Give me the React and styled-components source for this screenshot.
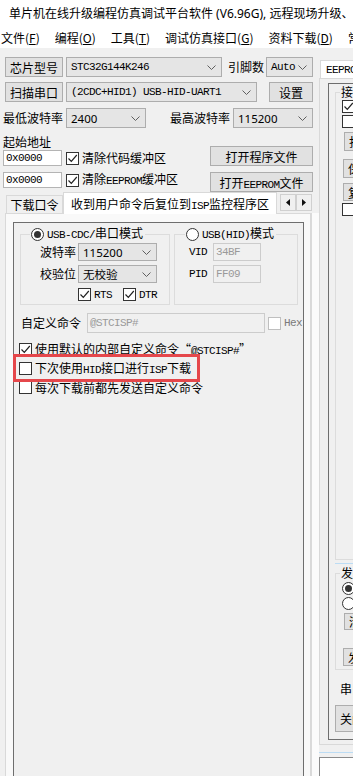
import React from "react";
import styled, { createGlobalStyle } from "styled-components";

const GlobalStyle = createGlobalStyle`
    html, body {
        margin: 0;
        padding: 0;
        background: #f0f0f0;
    }
    body {
        font-family: "Noto Sans CJK SC", "Noto Sans", sans-serif;
        font-size: 12px;
        color: #000;
    }
`;

const MONO = `"Liberation Mono", "Noto Sans CJK SC", monospace`;

const Window = styled.div`
    width: 353px;
    height: 776px;
    overflow: hidden;
    display: flex;
    flex-direction: column;
    background: #f0f0f0;
`;

const TitleBar = styled.div`
    height: 26px;
    flex-shrink: 0;
    background: #fff;
    display: flex;
    align-items: center;
    gap: 5px;
    padding-left: 4px;
    white-space: nowrap;
    font-family: "Noto Sans", "Noto Sans CJK SC", sans-serif;
    font-size: 12px;
`;

const MenuBar = styled.div`
    height: 22px;
    flex-shrink: 0;
    background: #fff;
    display: flex;
    align-items: center;
    gap: 15px;
    padding-left: 1px;
    white-space: nowrap;
    font-size: 12px;
`;

const MenuItem = styled.span`
    flex-shrink: 0;
    u {
        text-decoration: underline;
    }
`;

const Body = styled.div`
    flex: 1;
    min-height: 0;
    display: flex;
    overflow: hidden;
`;

const LeftCol = styled.div`
    width: 311px;
    flex-shrink: 0;
    padding-top: 9px;
    display: flex;
    flex-direction: column;
`;

const Splitter = styled.div`
    width: 7px;
    flex-shrink: 0;
    margin-top: 165px;
    background: #fbfbfb;
    border-left: 1px solid #dadada;
`;

const RightCol = styled.div`
    width: 300px;
    flex-shrink: 0;
    padding-top: 12px;
    display: flex;
    flex-direction: column;
`;

const Row = styled.div`
    display: flex;
    align-items: center;
    height: ${p => p.$h || 20}px;
    margin-top: ${p => p.$mt || 0}px;
    margin-left: ${p => p.$ml || 0}px;
    white-space: nowrap;
    flex-shrink: 0;
`;

const M = styled.span`
    font-family: ${MONO};
    font-size: 11px;
    letter-spacing: -0.6px;
`;

const Caption = styled.span`
    margin-left: ${p => p.$ml || 0}px;
    width: ${p => (p.$w ? `${p.$w}px` : "auto")};
    text-align: ${p => p.$align || "left"};
    color: ${p => p.$color || "#000"};
    font-family: ${p => (p.$mono ? MONO : "inherit")};
    font-size: ${p => (p.$mono ? "11px" : "12px")};
    letter-spacing: ${p => (p.$mono ? "-0.6px" : "0")};
    line-height: 14px;
    flex-shrink: 0;
    white-space: nowrap;
`;

const Btn = styled.div`
    box-sizing: border-box;
    width: ${p => p.$w}px;
    height: ${p => p.$h || 20}px;
    margin-left: ${p => p.$ml || 0}px;
    margin-top: ${p => p.$mt || 0}px;
    background: #e1e1e1;
    border: 1px solid #adadad;
    display: flex;
    align-items: center;
    justify-content: ${p => (p.$left ? "flex-start" : "center")};
    padding-left: ${p => (p.$left ? 4 : 0)}px;
    font-size: 12px;
    white-space: nowrap;
    overflow: hidden;
    flex-shrink: 0;
`;

const ComboBox = styled.div`
    box-sizing: border-box;
    width: ${p => p.$w}px;
    height: ${p => p.$h || 20}px;
    margin-left: ${p => p.$ml || 0}px;
    background: #e5e5e5;
    border: 1px solid #adadad;
    display: flex;
    align-items: center;
    justify-content: space-between;
    padding: 0 5px 0 4px;
    flex-shrink: 0;
    white-space: nowrap;
    overflow: hidden;
`;

const ComboValue = styled.span`
    font-family: ${p => (p.$mono ? MONO : `"Noto Sans", "Noto Sans CJK SC", sans-serif`)};
    font-size: ${p => (p.$mono ? "11px" : "11.5px")};
    letter-spacing: ${p => (p.$mono ? "-0.6px" : "0")};
`;

const TextBox = styled.div`
    box-sizing: border-box;
    width: ${p => p.$w}px;
    height: ${p => p.$h || 16}px;
    margin-left: ${p => p.$ml || 0}px;
    background: ${p => (p.$disabled ? "#f0f0f0" : "#fff")};
    border: 1px solid ${p => (p.$disabled ? "#cccccc" : "#b4b4b4")};
    display: flex;
    align-items: center;
    padding-left: 2px;
    font-family: ${MONO};
    font-size: 11px;
    letter-spacing: -0.6px;
    color: ${p => (p.$disabled ? "#9a9a9a" : "#000")};
    flex-shrink: 0;
`;

const CheckBox = styled.span`
    box-sizing: border-box;
    width: 13px;
    height: 13px;
    margin-left: ${p => p.$ml || 0}px;
    background: #fff;
    border: 1px solid ${p => (p.$disabled ? "#bfbfbf" : "#333")};
    display: flex;
    align-items: center;
    justify-content: center;
    flex-shrink: 0;
`;

const RadioBox = styled.span`
    box-sizing: border-box;
    width: 13px;
    height: 13px;
    margin-left: ${p => p.$ml || 0}px;
    border-radius: 50%;
    background: #fff;
    border: 1px solid #333;
    display: flex;
    align-items: center;
    justify-content: center;
    flex-shrink: 0;
`;

const RadioDot = styled.span`
    width: 7px;
    height: 7px;
    border-radius: 50%;
    background: #333;
`;

const TabStrip = styled.div`
    display: flex;
    align-items: flex-end;
    height: 21px;
    margin-left: 6px;
    flex-shrink: 0;
    position: relative;
    z-index: 1;
`;

const Tab = styled.div`
    box-sizing: border-box;
    width: ${p => p.$w}px;
    height: ${p => (p.$active ? 22 : 18)}px;
    margin-bottom: ${p => (p.$active ? -1 : 0)}px;
    background: ${p => (p.$active ? "#fff" : "#f0f0f0")};
    border: 1px solid #d9d9d9;
    border-bottom: none;
    display: flex;
    align-items: center;
    justify-content: center;
    white-space: nowrap;
    flex-shrink: 0;
`;

const ArrowPair = styled.div`
    display: flex;
    margin-left: 3px;
    margin-bottom: 2px;
`;

const ArrowBtn = styled.div`
    box-sizing: border-box;
    width: 16px;
    height: 17px;
    background: #f0f0f0;
    border: 1px solid #d0d0d0;
    display: flex;
    align-items: center;
    justify-content: center;
`;

const Pane = styled.div`
    box-sizing: border-box;
    width: 306px;
    height: 600px;
    margin-left: 5px;
    background: #f9f9f9;
    border: 1px solid #d9d9d9;
    padding: 8px 0 0 7px;
    flex-shrink: 0;
`;

const DarkBox = styled.div`
    box-sizing: border-box;
    position: relative;
    width: 291px;
    height: 580px;
    background: #f0f0f0;
    border: 1px solid #6e6e6e;
    display: flex;
    flex-direction: column;
`;

const GroupRow = styled.div`
    display: flex;
    margin-top: 4px;
`;

const Group = styled.fieldset`
    box-sizing: border-box;
    width: ${p => p.$w}px;
    height: ${p => p.$h}px;
    margin: ${p => p.$mt || 0}px 0 0 ${p => p.$ml || 0}px;
    padding: 0;
    min-width: 0;
    border: 1px solid #dcdcdc;
    flex-shrink: 0;
`;

const Legend = styled.legend`
    display: flex;
    align-items: center;
    gap: 3px;
    margin-left: ${p => p.$ml || 8}px;
    padding: 0 2px 0 1px;
    height: 14px;
    line-height: 14px;
    white-space: nowrap;
`;

const Highlight = styled.div`
    position: absolute;
    left: -1px;
    top: 131px;
    width: 187px;
    height: 28px;
    box-sizing: border-box;
    border: 3px solid #e5474b;
    pointer-events: none;
`;

const RTab = styled.div`
    box-sizing: border-box;
    height: 18px;
    margin-left: 1px;
    width: 120px;
    background: #fff;
    border: 1px solid #d9d9d9;
    border-bottom: none;
    padding-left: 5px;
    display: flex;
    align-items: center;
    white-space: nowrap;
    flex-shrink: 0;
`;

const RPane = styled.div`
    box-sizing: border-box;
    height: 667px;
    background: #f0f0f0;
    border: 1px solid #d9d9d9;
    padding: 4px 0 0 8px;
    flex-shrink: 0;
`;

const RDark = styled.div`
    box-sizing: border-box;
    height: 657px;
    border: 1px solid #6e6e6e;
    padding-left: 6px;
    display: flex;
    flex-direction: column;
`;

const BlueLine = styled.div`
    height: 1px;
    margin-top: ${p => p.$mt || 0}px;
    background: #bcdcf4;
    flex-shrink: 0;
`;

const OutputBox = styled.div`
    height: 40px;
    margin-top: 4px;
    background: #fff;
    border: 1px solid #8a8a8a;
    flex-shrink: 0;
`;

const Stack = styled.div`
    display: flex;
    flex-direction: column;
    width: ${p => (p.$w ? `${p.$w}px` : "auto")};
    margin-left: ${p => p.$ml || 0}px;
    margin-top: ${p => p.$mt || 0}px;
    flex-shrink: 0;
`;

const Split = styled.div`
    display: flex;
    margin-top: 6px;
    flex-shrink: 0;
`;

const AppIcon = () => (
    <svg width="15" height="14" viewBox="0 0 15 14">
        <path d="M1 3.5 A9.5 9.5 0 0 1 10.5 13" fill="none" stroke="#e0202a" strokeWidth="1.6" />
        <path d="M1 6.3 A6.7 6.7 0 0 1 7.7 13" fill="none" stroke="#e0202a" strokeWidth="1.6" />
        <path d="M1 0.8 A12.2 12.2 0 0 1 13.2 13" fill="none" stroke="#e0202a" strokeWidth="1.6" />
        <path d="M1 9 A4 4 0 0 1 5 13 L1 13 Z" fill="#1f3fbf" />
        <rect x="0" y="12" width="6" height="2" fill="#1f3fbf" />
    </svg>
);

const Chevron = () => (
    <svg width="9" height="5" viewBox="0 0 9 5">
        <path d="M0.5 0.5 L4.5 4.5 L8.5 0.5" fill="none" stroke="#5f5f5f" strokeWidth="1" />
    </svg>
);

const Tick = () => (
    <svg width="11" height="11" viewBox="0 0 11 11">
        <path d="M1.5 5.5 L4.3 8.3 L9.8 2" fill="none" stroke="#222" strokeWidth="1.2" />
    </svg>
);

const Combo = ({ w, h, ml, mono, children }) => (
    <ComboBox $w={w} $h={h} $ml={ml}>
        <ComboValue $mono={mono}>{children}</ComboValue>
        <Chevron />
    </ComboBox>
);

const Check = ({ checked, disabled, ml }) => (
    <CheckBox $disabled={disabled} $ml={ml}>
        {checked && <Tick />}
    </CheckBox>
);

const Radio = ({ checked, ml }) => (
    <RadioBox $ml={ml}>{checked && <RadioDot />}</RadioBox>
);

const Triangle = ({ dir }) => (
    <svg width="4" height="7" viewBox="0 0 4 7">
        <path d={dir === "left" ? "M4 0 L0 3.5 L4 7 Z" : "M0 0 L4 3.5 L0 7 Z"} fill="#111" />
    </svg>
);

const App = () => (
    <Window>
        <GlobalStyle />
        <TitleBar>
            <AppIcon />
            <span>单片机在线升级编程仿真调试平台软件 (V6.96G), 远程现场升级、脱机下载</span>
        </TitleBar>
        <MenuBar>
            <MenuItem>文件(<u>F</u>)</MenuItem>
            <MenuItem>编程(<u>O</u>)</MenuItem>
            <MenuItem>工具(<u>T</u>)</MenuItem>
            <MenuItem>调试仿真接口(<u>G</u>)</MenuItem>
            <MenuItem>资料下载(<u>D</u>)</MenuItem>
            <MenuItem>常用工具(<u>R</u>)</MenuItem>
        </MenuBar>
        <Body>
            <LeftCol>
                <Row>
                    <Btn $w={58} $ml={5}>芯片型号</Btn>
                    <Combo w={156} ml={3} mono>STC32G144K246</Combo>
                    <Caption $ml={6}>引脚数</Caption>
                    <Combo w={47} ml={2} mono>Auto</Combo>
                </Row>
                <Row $mt={5}>
                    <Btn $w={58} $ml={5}>扫描串口</Btn>
                    <Combo w={191} ml={3} mono>(2CDC+HID1) USB-HID-UART1</Combo>
                    <Btn $w={44} $ml={12}>设置</Btn>
                </Row>
                <Row $mt={6}>
                    <Caption $ml={3}>最低波特率</Caption>
                    <Combo w={80} ml={3}>2400</Combo>
                    <Caption $ml={24}>最高波特率</Caption>
                    <Combo w={80} ml={3}>115200</Combo>
                </Row>
                <Split>
                    <Stack $w={207} $ml={3}>
                        <Row $h={15}>
                            <Caption>起始地址</Caption>
                        </Row>
                        <Row $h={16} $mt={1}>
                            <TextBox $w={59}>0x0000</TextBox>
                            <Check checked ml={4} />
                            <Caption $ml={3}>清除代码缓冲区</Caption>
                        </Row>
                        <Row $h={16} $mt={6}>
                            <TextBox $w={59}>0x0000</TextBox>
                            <Check checked ml={4} />
                            <Caption $ml={3}>
                                清除<M>EEPROM</M>缓冲区
                            </Caption>
                        </Row>
                    </Stack>
                    <Stack>
                        <Btn $w={103} $mt={12}>打开程序文件</Btn>
                        <Btn $w={103} $mt={6}>
                            <span>
                                打开<M>EEPROM</M>文件
                            </span>
                        </Btn>
                    </Stack>
                </Split>
                <TabStrip>
                    <Tab $w={57}>下载口令</Tab>
                    <Tab $w={214} $active>
                        <span>
                            收到用户命令后复位到<M>ISP</M>监控程序区
                        </span>
                    </Tab>
                    <ArrowPair>
                        <ArrowBtn>
                            <Triangle dir="left" />
                        </ArrowBtn>
                        <ArrowBtn>
                            <Triangle dir="right" />
                        </ArrowBtn>
                    </ArrowPair>
                </TabStrip>
                <Pane>
                    <DarkBox>
                        <GroupRow>
                            <Group $w={150} $h={78} $ml={6}>
                                <Legend $ml={9}>
                                    <Radio checked />
                                    <span>
                                        <M>USB-CDC/</M>串口模式
                                    </span>
                                </Legend>
                                <Row $h={18} $mt={2}>
                                    <Caption $w={55} $align="right">波特率</Caption>
                                    <Combo w={79} h={18} ml={2}>115200</Combo>
                                </Row>
                                <Row $h={18} $mt={4}>
                                    <Caption $w={55} $align="right">校验位</Caption>
                                    <Combo w={79} h={18} ml={2}>无校验</Combo>
                                </Row>
                                <Row $h={13} $mt={5} $ml={57}>
                                    <Check checked />
                                    <Caption $mono $ml={3}>RTS</Caption>
                                    <Check checked ml={11} />
                                    <Caption $mono $ml={3}>DTR</Caption>
                                </Row>
                            </Group>
                            <Group $w={124} $h={78} $ml={4}>
                                <Legend $ml={10}>
                                    <Radio />
                                    <span>
                                        <M>USB(HID)</M>模式
                                    </span>
                                </Legend>
                                <Row $h={18} $mt={2}>
                                    <Caption $mono $w={32} $align="right">VID</Caption>
                                    <TextBox $w={48} $h={18} $ml={6} $disabled>34BF</TextBox>
                                </Row>
                                <Row $h={18} $mt={4}>
                                    <Caption $mono $w={32} $align="right">PID</Caption>
                                    <TextBox $w={48} $h={18} $ml={6} $disabled>FF09</TextBox>
                                </Row>
                            </Group>
                        </GroupRow>
                        <Row $mt={8} $ml={7}>
                            <Caption>自定义命令</Caption>
                            <TextBox $w={178} $h={20} $ml={6} $disabled>@STCISP#</TextBox>
                            <Check disabled ml={3} />
                            <Caption $mono $ml={3} $color="#7a7a7a">Hex</Caption>
                        </Row>
                        <Row $h={19} $mt={7} $ml={5}>
                            <Check checked />
                            <Caption $ml={3}>
                                使用默认的内部自定义命令“<M>@STCISP#</M>”
                            </Caption>
                        </Row>
                        <Row $h={19} $ml={5}>
                            <Check />
                            <Caption $ml={3}>
                                下次使用<M>HID</M>接口进行<M>ISP</M>下载
                            </Caption>
                        </Row>
                        <Row $h={19} $ml={5}>
                            <Check />
                            <Caption $ml={3}>每次下载前都先发送自定义命令</Caption>
                        </Row>
                        <Highlight />
                    </DarkBox>
                </Pane>
            </LeftCol>
            <Splitter />
            <RightCol>
                <RTab>
                    <M>EEPROM</M>文件
                </RTab>
                <RPane>
                    <RDark>
                        <Group $w={200} $h={475} $mt={1}>
                            <Legend $ml={4}>接收缓冲区</Legend>
                            <Row $h={13} $mt={1} $ml={6}>
                                <Check checked />
                                <Caption $ml={3}>文本模式</Caption>
                            </Row>
                            <Row $h={13} $mt={2} $ml={6}>
                                <Check />
                                <Caption $ml={3}>HEX模式</Caption>
                            </Row>
                            <Btn $w={70} $h={19} $mt={4} $ml={8} $left>打开文件</Btn>
                            <Btn $w={70} $h={19} $mt={8} $ml={7} $left>保存数据</Btn>
                            <Btn $w={70} $h={18} $mt={5} $ml={7} $left>复制</Btn>
                            <Row $h={13} $mt={2} $ml={6}>
                                <Check />
                            </Row>
                        </Group>
                        <BlueLine $mt={3} />
                        <Group $w={200} $h={104} $mt={2}>
                            <Legend $ml={4}>发送缓冲区</Legend>
                            <Row $h={13} $mt={2} $ml={6}>
                                <Radio checked />
                                <Caption $ml={3}>文本模式</Caption>
                            </Row>
                            <Row $h={13} $mt={2} $ml={6}>
                                <Radio />
                                <Caption $ml={3}>HEX模式</Caption>
                            </Row>
                            <Btn $w={70} $h={17} $mt={3} $ml={8} $left>清空</Btn>
                            <Btn $w={70} $h={18} $mt={18} $ml={7} $left>发送文件</Btn>
                        </Group>
                        <Row $h={14} $mt={12} $ml={5}>
                            <Caption>串口</Caption>
                        </Row>
                        <Btn $w={70} $h={27} $mt={9} $left>关闭串口</Btn>
                    </RDark>
                </RPane>
                <BlueLine $mt={7} />
                <OutputBox />
            </RightCol>
        </Body>
    </Window>
);

export default App;
